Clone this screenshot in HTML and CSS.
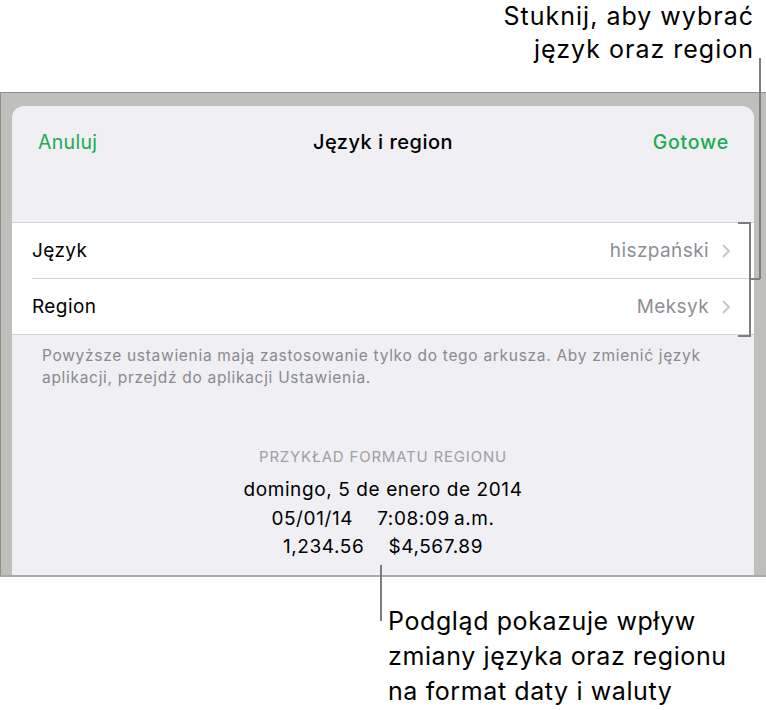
FILE: index.html
```html
<!DOCTYPE html>
<html lang="pl">
<head>
  <meta charset="UTF-8" />
  <title>Język i region</title>
  <link rel="stylesheet" href="styles.css">
</head>
<body>

<div class="callout-top">Stuknij, aby wybrać<br>język oraz region</div>
<div class="leader-top"></div>

<div class="device">
  <div class="sheet">
    <div class="nav">
      <span class="nav-btn">Anuluj</span>
      <span class="nav-title">Język i region</span>
      <span class="nav-btn nav-done">Gotowe</span>
    </div>

    <div class="table">
      <div class="row">
        <span class="row-label">Język</span>
        <span class="row-value">hiszpański</span>
        <svg class="chevron" width="8" height="14" viewBox="0 0 8 14"><polyline points="1,1 7,7 1,13" /></svg>
      </div>
      <div class="row">
        <span class="row-label">Region</span>
        <span class="row-value">Meksyk</span>
        <svg class="chevron" width="8" height="14" viewBox="0 0 8 14"><polyline points="1,1 7,7 1,13" /></svg>
      </div>
    </div>

    <p class="table-note">Powyższe ustawienia mają zastosowanie tylko do tego arkusza. Aby zmienić język aplikacji, przejdź do aplikacji Ustawienia.</p>

    <div class="sample">
      <div class="sample-title">PRZYKŁAD FORMATU REGIONU</div>
      <div>domingo, 5 de enero de 2014</div>
      <div>05/01/14<span class="gap"></span>7:08:09&#8201;a.m.</div>
      <div>1,234.56<span class="gap"></span>$4,567.89</div>
    </div>
  </div>
  <div class="bracket"></div>
</div>

<div class="leader-bottom"></div>
<div class="callout-bottom">Podgląd pokazuje wpływ<br>zmiany języka oraz regionu<br>na format daty i waluty</div>

</body>
</html>
```

FILE: styles.css
```css
body {
  margin: 0;
  width: 766px;
  height: 710px;
  background: #fff;
  font-family: Inter, Roboto, "Liberation Sans", sans-serif;
  color: #000;
  position: relative;
  overflow: hidden;
}

.callout-top {
  font-size: 25px;
  letter-spacing: 1px;
  line-height: 33px;
  text-align: right;
  padding: 0 13px 0 0;
  margin-right: -1px;
  height: 92px;
  box-sizing: border-box;
}
.leader-top {
  position: absolute;
  left: 759px;
  top: 58px;
  width: 2px;
  height: 221px;
  background: #7d7d7d;
  z-index: 2;
}

.device {
  position: relative;
  height: 485px;
  box-sizing: border-box;
  background: #bfc0bc;
  border-top: 1px solid #8e8f8c;
  border-left: 1px solid #8e8f8c;
  border-bottom: 2px solid #a9aaa7;
  padding: 13px 12px 0 11px;
}
.sheet {
  background: #efeff4;
  border-radius: 12px 12px 0 0;
  height: 100%;
}

.nav {
  display: grid;
  grid-template-columns: 1fr auto 1fr;
  align-items: center;
  height: 72px;
  padding: 0 26px;
  font-size: 19.5px;
}
.nav-btn { color: #1aad50; letter-spacing: 0.3px; }
.nav-done { text-align: right; font-weight: 500; letter-spacing: 0.8px; margin-right: -1px; }
.nav-title { font-weight: 500; font-size: 20px; letter-spacing: 0.5px; }

.table {
  margin-top: 44px;
  background: #fff;
  border-top: 1px solid #d4d4d8;
  border-bottom: 1px solid #d4d4d8;
  padding-left: 20px;
}
.row {
  display: flex;
  align-items: center;
  height: 55px;
  padding-right: 24px;
  font-size: 19px;
  letter-spacing: 0.4px;
}
.row + .row { border-top: 1px solid #d4d4d8; }
.row-label { flex: 1; }
.row-value { color: #8e8e93; margin-right: 13px; }
.chevron polyline {
  fill: none;
  stroke: #c4c4c8;
  stroke-width: 1.8;
}

.table-note {
  margin: 10px 40px 0 30px;
  font-size: 15.5px;
  letter-spacing: 0.7px;
  line-height: 22px;
  color: #8a8a8f;
}

.sample {
  margin-top: 58px;
  text-align: center;
  font-size: 19px;
  letter-spacing: 0.6px;
  line-height: 28.7px;
}
.sample-title {
  font-size: 15px;
  letter-spacing: 0.8px;
  color: #a0a0a5;
  line-height: 20px;
  margin-bottom: 9px;
}
.gap { display: inline-block; width: 24px; }

.bracket {
  position: absolute;
  left: 737px;
  top: 129px;
  width: 11px;
  height: 111px;
  border: 2px solid #7d7d7d;
  border-left: none;
}
.bracket::after {
  content: "";
  position: absolute;
  left: 11px;
  top: 54px;
  width: 11px;
  height: 2px;
  background: #7d7d7d;
}

.leader-bottom {
  position: absolute;
  left: 380px;
  top: 565px;
  width: 2px;
  height: 56px;
  background: #7d7d7d;
}
.callout-bottom {
  margin: 27px 0 0 388px;
  font-size: 25px;
  letter-spacing: 0.6px;
  line-height: 35px;
}
```
